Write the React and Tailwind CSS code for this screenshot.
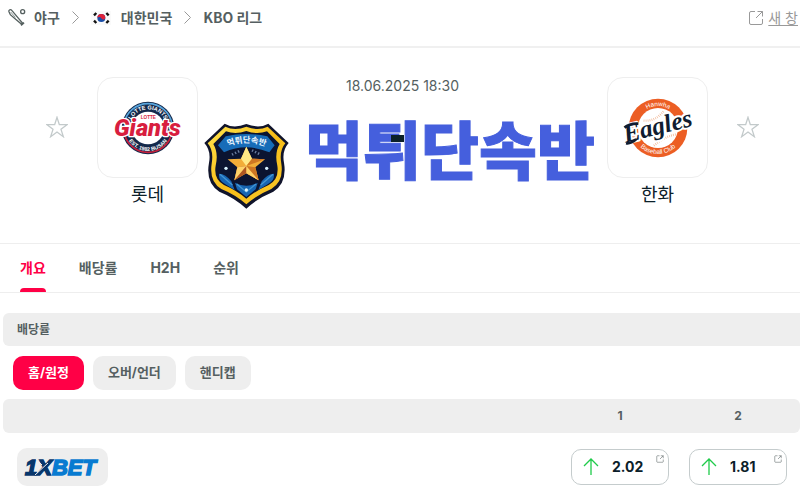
const tabs = ["개요", "배당률", "H2H", "순위"];
const markets = ["홈/원정", "오버/언더", "핸디캡"];
const odds = ["2.02", "1.81"];

function BatIcon() {
  return (
    <svg className="h-[18px] w-[18px]" viewBox="0 0 54 54" fill="none" stroke="#55605f" strokeWidth="4" aria-hidden="true">
      <path d="M3 8C1 2 8 0 12 5L29 25L44 43L41 46L23 31L7 17Z" />
      <path d="M8 9L22 25" strokeWidth="2" />
      <path d="M39 49L48 41" strokeWidth="5" />
      <circle cx="44" cy="8" r="6" />
    </svg>
  );
}

function Chevron() {
  return (
    <svg className="h-[13px] w-[7px]" viewBox="0 0 7 13" fill="none" stroke="#999" aria-hidden="true">
      <path d="M.5 .5L6.5 6.5L.5 12.5" />
    </svg>
  );
}

function KoreaFlag() {
  return (
    <svg className="h-[14px] w-[20px]" viewBox="0 0 60 42" aria-hidden="true">
      <rect width="60" height="42" fill="#fafafa" />
      <circle cx="31" cy="21" r="12" fill="#1b4fa8" />
      <path d="M19 21A12 12 0 0 1 43 21C41 27 34 27 31 22C28 17 22 17 19 21Z" fill="#df2138" />
      <g stroke="#111" strokeWidth="7">
        <path d="M9 13L16 6" />
        <path d="M46 6L53 13" />
        <path d="M9 29L16 36" />
        <path d="M46 36L53 29" />
      </g>
    </svg>
  );
}

function ExternalIcon({ className }) {
  return (
    <svg className={className} viewBox="0 0 16 16" fill="none" stroke="currentColor" aria-hidden="true">
      <path d="M7 1.500H3Q1.500 1.500 1.500 3V13Q1.500 14.500 3 14.500H13Q14.500 14.500 14.500 13V9" />
      <path d="M9.500 1.500H14.500V6.500M14.500 1.500L8 8" />
    </svg>
  );
}

function StarButton({ label }) {
  return (
    <button type="button" aria-label={label} className="mt-[39px] h-[22px] w-[22px] shrink-0">
      <svg viewBox="0 0 66 66" fill="none" stroke="#c3cacb" strokeWidth="4">
        <path d="M33 4L40 26H63L45 40L52 62L33 48L14 62L21 40L3 26H26Z" />
      </svg>
    </button>
  );
}

function GiantsLogo() {
  return (
    <svg className="h-[56px] w-[80px]" viewBox="229 85 240 168" role="img" aria-label="Lotte Giants">
      <defs>
        <path id="giants-top" d="M293 169A56 56 0 0 1 405 169" />
        <path id="giants-bottom" d="M280 169A69 69 0 0 0 418 169" />
      </defs>
      <circle cx="349" cy="169" r="79" fill="#14294b" />
      <path d="M277 157A73 73 0 0 1 421 157" fill="none" stroke="#58a5dc" strokeWidth="5" />
      <path d="M277 181A73 73 0 0 0 421 181" fill="none" stroke="#c8203c" strokeWidth="5" />
      <circle cx="349" cy="169" r="49" fill="#fff" />
      <g fill="#fff" fontFamily="Liberation Sans" fontWeight="700" fontSize="17" textAnchor="middle">
        <text><textPath href="#giants-top" startOffset="50%">LOTTE GIANTS</textPath></text>
        <text fontSize="16"><textPath href="#giants-bottom" startOffset="50%">EST. 1982 BUSAN</textPath></text>
      </g>
      <text x="347" y="194" textAnchor="middle" fill="#d81e3f" stroke="#fff" strokeWidth="8" paintOrder="stroke" strokeLinejoin="round" fontFamily="Roboto" fontWeight="900" fontStyle="italic" fontSize="71">Giants</text>
      <text x="350" y="142" textAnchor="middle" fill="#d7263d" fontFamily="Liberation Sans" fontWeight="700" fontSize="14">LOTTE</text>
    </svg>
  );
}

function EaglesLogo() {
  return (
    <svg className="h-[60px] w-[80px]" viewBox="52 81 240 180" role="img" aria-label="Hanwha Eagles">
      <defs>
        <path id="eagles-top" d="M106 171A66 66 0 0 1 238 171" />
        <path id="eagles-bottom" d="M94 171A78 78 0 0 0 250 171" />
      </defs>
      <circle cx="172" cy="171" r="88" fill="#ec5e24" />
      <circle cx="172" cy="171" r="60" fill="#fff" />
      <g fill="none" stroke="#f0b28e" strokeWidth="7" strokeDasharray="2 4">
        <path d="M129 149Q166 151 190 119" />
        <path d="M160 224Q190 196 228 190" />
      </g>
      <g fill="#fff" fontFamily="Liberation Sans" fontSize="19" textAnchor="middle">
        <text><textPath href="#eagles-top" startOffset="50%">Hanwha</textPath></text>
        <text><textPath href="#eagles-bottom" startOffset="50%">Baseball Club</textPath></text>
      </g>
      <g transform="rotate(-14 172 171)" textAnchor="middle" fontFamily="Liberation Serif" fontWeight="700" fontStyle="italic" fontSize="76" strokeLinejoin="round">
        <text x="172" y="190" fill="#101c30" stroke="#fff" strokeWidth="12" paintOrder="stroke">Eagles</text>
        <path d="M68 192Q80 198 100 188M75 146Q92 136 118 144" fill="none" stroke="#101c30" strokeWidth="8" />
      </g>
    </svg>
  );
}

function Shield() {
  return (
    <svg className="h-[88px] w-[85px] shrink-0" viewBox="14 30 255 264" aria-hidden="true">
      <defs>
        <linearGradient id="gold" x1="0" y1="0" x2="1" y2="1">
          <stop offset="0" stopColor="#ffe34d" />
          <stop offset="0.5" stopColor="#f7bd18" />
          <stop offset="1" stopColor="#f9c92b" />
        </linearGradient>
        <path id="badge-arc" d="M82 108Q141 83 202 108" />
      </defs>
      <path d="M76 38Q103 54 141 39Q180 54 207 38L268 96Q247 119 254 155Q264 216 222 242Q177 260 141 293Q105 260 60 242Q18 216 29 155Q36 119 15 96Z" fill="#10142b" />
      <path d="M78 47Q107 61 141 47Q176 61 205 47L258 97Q239 119 246 158Q254 211 216 234Q174 251 141 280Q108 251 66 234Q29 211 37 158Q44 119 25 97Z" fill="url(#gold)" />
      <path d="M80 61Q109 72 141 60Q174 72 203 61L241 99Q225 126 234 164Q240 204 208 222Q169 239 141 263Q113 239 74 222Q42 204 49 164Q58 126 42 99Z" fill="#0b1431" />
      <path d="M79 76Q141 62 204 76L226 103L210 124Q141 94 74 124L56 103Z" fill="#176cb8" />
      <path d="M59 188Q79 189 96 211L106 237L77 219Q57 209 59 188ZM224 188Q204 189 187 211L177 237L206 219Q226 209 224 188ZM107 215Q141 233 175 215L169 235L141 258L113 235Z" fill="#1765b2" />
      <path d="M62 190L99 222M221 190L184 222M112 219L141 243L170 219" fill="none" stroke="#4396d3" strokeWidth="4" />
      <path d="M98 131L124 118M158 118L184 131" stroke="#6c7fa2" strokeWidth="8" strokeDasharray="4 6" />
      <path d="M141 107L158 143L197 145L168 169L178 208L141 187L105 208L114 169L85 145L125 143Z" fill="#f2ad38" />
      <path d="M141 107L158 143L141 165L125 143Z" fill="#ffe986" />
      <path d="M197 145L141 165L168 169L178 208L141 187V165L158 143Z" fill="#cf7723" />
      <path d="M85 145L141 165L114 169L105 208L141 187V165Z" fill="#ad5622" />
      <path d="M141 165L178 208L141 187ZM141 165L114 169L105 208Z" fill="#ffd269" />
      <g fill="#d9f3ff">
        <circle cx="80" cy="172" r="5" />
        <circle cx="202" cy="172" r="5" />
        <circle cx="141" cy="237" r="5" />
      </g>
      <text fill="#eef7ff" fontFamily="Noto Sans CJK KR" fontWeight="700" fontSize="25" textAnchor="middle">
        <textPath href="#badge-arc" startOffset="50%">먹튀단속반</textPath>
      </text>
    </svg>
  );
}

function Team({ name, children }) {
  return (
    <div className="flex shrink-0 flex-col items-center">
      <div className="flex h-[101px] w-[101px] items-center justify-center rounded-2xl border border-[#eee]">
        {children}
      </div>
      <p className="mt-[5px] text-[18px] leading-6 text-[#0b2029]">{name}</p>
    </div>
  );
}

function BookmakerLogo() {
  return (
    <svg className="h-7 w-[84px]" viewBox="0 0 84 28" role="img" aria-label="1XBET">
      <text x="4" y="22" fontFamily="Liberation Sans" fontWeight="700" fontStyle="italic" fontSize="22" strokeWidth="1.5" fill="#07366b" stroke="#07366b">
        1X<tspan fill="#087bd1" stroke="#087bd1">BET</tspan>
      </text>
      <path d="M14 22L27 10M14 5L21 12" stroke="#eee" fill="none" />
    </svg>
  );
}

function OddButton({ value }) {
  return (
    <button type="button" className="relative flex h-9 w-full items-center rounded-[10px] border border-[#c5cccd] pl-[11px] text-[#0b2029]">
      <svg className="h-[17px] w-[16px]" viewBox="0 0 16 17" fill="none" stroke="#20cb4b" aria-hidden="true">
        <path d="M8 17V1M1 8L8 1L15 8" strokeWidth="1.3" />
      </svg>
      <span className="ml-[13px] text-[14px] font-bold">{value}</span>
      <ExternalIcon className="absolute top-[5px] right-1 h-2 w-2 text-[#465052]" />
    </button>
  );
}

export default function App() {
  return (
    <div className="min-h-screen bg-white font-['Inter','Noto_Sans_CJK_KR',sans-serif] text-[#555f61]">
      <header className="flex h-12 items-start justify-between border-b-2 border-[#f0f0f0] pr-[2px] pl-2">
        <nav aria-label="breadcrumb" className="flex h-[35px] items-center font-['Noto_Sans_CJK_KR',sans-serif] text-[14px] font-bold">
          <BatIcon />
          <a href="#baseball" className="ml-2">야구</a>
          <span className="mx-3"><Chevron /></span>
          <KoreaFlag />
          <a href="#korea" className="ml-[10px]">대한민국</a>
          <span className="mx-3"><Chevron /></span>
          <a href="#kbo">KBO 리그</a>
        </nav>
        <a href="#new-window" className="flex h-[35px] items-center gap-1 text-[14px] text-[#999]">
          <ExternalIcon className="h-4 w-4" />
          <span className="underline underline-offset-2">새 창</span>
        </a>
      </header>

      <section className="flex items-start border-b border-[#eee] pt-[29px] pr-[41px] pb-[34px] pl-[46px]">
        <StarButton label="롯데 즐겨찾기" />
        <div className="ml-[29px]">
          <Team name="롯데"><GiantsLogo /></Team>
        </div>
        <div className="flex min-w-0 flex-1 flex-col items-center">
          <time className="text-[14px] leading-[18px]">18.06.2025 18:30</time>
          <div className="mt-[26px] flex items-start gap-4 pr-[6px]">
            <Shield />
            <div className="relative">
              <p className="text-[63px] leading-[60px] font-black whitespace-nowrap text-[#455fdd] [-webkit-text-stroke:1px_#455fdd]">먹튀단속반</p>
              <span className="absolute top-[14px] left-[86px] h-[7px] w-[13px] bg-[#0b2029]" />
            </div>
          </div>
        </div>
        <div className="mr-[29px]">
          <Team name="한화"><EaglesLogo /></Team>
        </div>
        <StarButton label="한화 즐겨찾기" />
      </section>

      <nav className="flex h-[49px] gap-[33px] border-b border-[#eee] pl-5 text-[14px] font-bold">
        {tabs.map((tab, i) => (
          <button
            key={tab}
            type="button"
            className={i === 0 ? "flex flex-col text-[#ff0046]" : "flex flex-col"}
          >
            <span className="pt-1 leading-10">{tab}</span>
            {i === 0 && <span className="h-1 w-full rounded-t-sm bg-[#ff0046]" />}
          </button>
        ))}
      </nav>

      <main className="pt-5 pl-[3px]">
        <h2 className="rounded-l-md bg-[#eee] pl-[14px] text-[12px] leading-[33px] font-bold">배당률</h2>
        <div className="flex gap-[9px] pt-[10px] pb-[9px] pl-[10px]">
          {markets.map((market, i) => (
            <button
              key={market}
              type="button"
              className={
                i === 0
                  ? "h-[34px] rounded-[10px] bg-[#ff0046] px-[15px] text-[13px] font-bold text-white"
                  : "h-[34px] rounded-[10px] bg-[#eee] px-[15px] text-[13px] font-bold"
              }
            >
              {market}
            </button>
          ))}
        </div>
        <table className="w-full table-fixed">
          <thead>
            <tr className="h-[34px] text-[12px]">
              <th aria-label="북메이커" className="rounded-l-md bg-[#eee]" />
              <th scope="col" className="w-[118px] bg-[#eee]">1</th>
              <th scope="col" className="w-[121px] rounded-r-md bg-[#eee] pr-[3px]">2</th>
            </tr>
          </thead>
          <tbody>
            <tr className="h-[67px]">
              <td className="pl-[14px]">
                <a href="#1xbet" className="flex h-[38px] w-[91px] items-center justify-center rounded-[10px] bg-[#eee]">
                  <BookmakerLogo />
                </a>
              </td>
              <td className="px-[10px]"><OddButton value={odds[0]} /></td>
              <td className="pr-[13px] pl-[10px]"><OddButton value={odds[1]} /></td>
            </tr>
          </tbody>
        </table>
      </main>
    </div>
  );
}
